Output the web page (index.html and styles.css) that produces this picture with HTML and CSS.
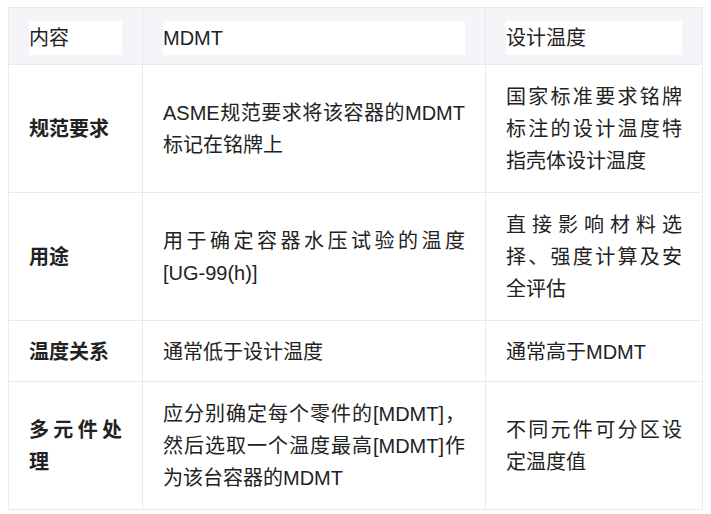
FILE: index.html
```html
<!DOCTYPE html>
<html lang="zh-CN">
<head>
<meta charset="utf-8">
<title>MDMT 与设计温度</title>
<link rel="stylesheet" href="styles.css">
</head>
<body>
<table class="cmp">
  <colgroup>
    <col class="c1">
    <col class="c2">
    <col class="c3">
  </colgroup>
  <thead>
    <tr>
      <th><div class="hbox">内容</div></th>
      <th><div class="hbox">MDMT</div></th>
      <th><div class="hbox">设计温度</div></th>
    </tr>
  </thead>
  <tbody>
    <tr>
      <td class="label">规范要求</td>
      <td>ASME规范要求将该容器的MDMT标记在铭牌上</td>
      <td>国家标准要求铭牌标注的设计温度特指壳体设计温度</td>
    </tr>
    <tr>
      <td class="label">用途</td>
      <td>用于确定容器水压试验的温度[UG-99(h)]</td>
      <td>直接影响材料选择、强度计算及安全评估</td>
    </tr>
    <tr class="single">
      <td class="label">温度关系</td>
      <td>通常低于设计温度</td>
      <td>通常高于MDMT</td>
    </tr>
    <tr>
      <td class="label">多元件处理</td>
      <td>应分别确定每个零件的[MDMT]，然后选取一个温度最高[MDMT]作为该台容器的MDMT</td>
      <td>不同元件可分区设定温度值</td>
    </tr>
  </tbody>
</table>
</body>
</html>
```

FILE: styles.css
```css
html, body {
  margin: 0;
  padding: 0;
  background: #ffffff;
}
body {
  padding: 7px 9px 8px 8px;
  font-family: "Liberation Sans", "Noto Sans CJK SC", sans-serif;
  font-size: 20px;
  color: #222222;
}
.cmp {
  width: 694px;
  border-collapse: collapse;
  table-layout: fixed;
  border: 1px solid #e9eaec;
}
.c1 { width: 134px; }
.c2 { width: 343px; }
.c3 { width: 217px; }
.cmp th,
.cmp td {
  border: 1px solid #e9eaec;
  text-align: justify;
  vertical-align: middle;
}
.cmp th {
  background: #f4f5f9;
  padding: 13px 20px 9px 20px;
  font-weight: 400;
}
.hbox {
  background: #ffffff;
  height: 34px;
  line-height: 34px;
  text-align: left;
  white-space: nowrap;
  overflow: hidden;
}
.cmp td {
  padding: 16px 20px 15px 20px;
  line-height: 32px;
}
.cmp .single td {
  padding: 15px 20px 13px 20px;
}
.cmp td.label {
  font-weight: 700;
}
```
